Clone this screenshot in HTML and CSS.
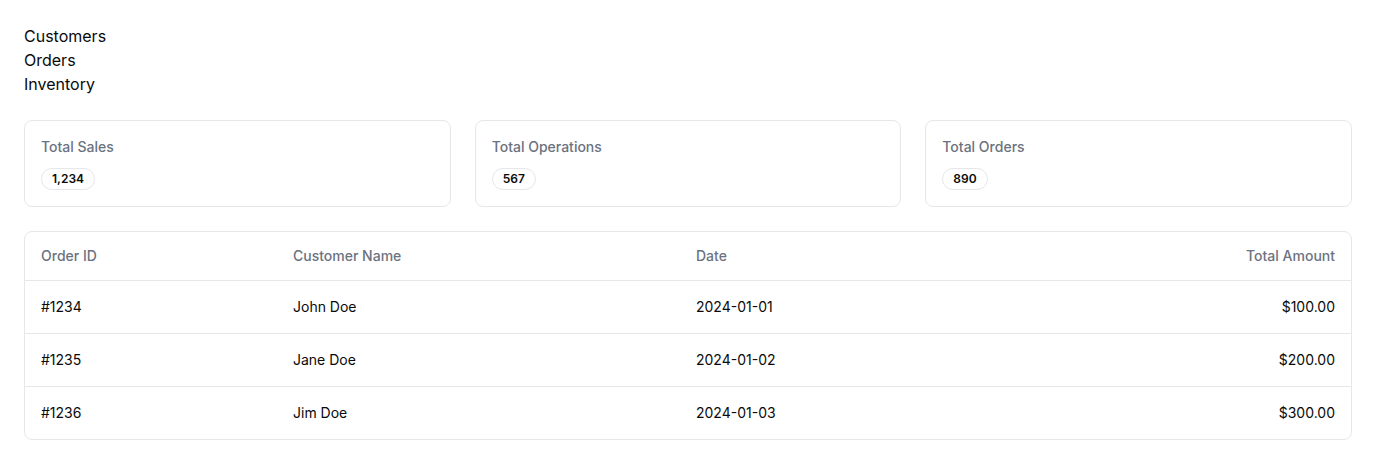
FILE: index.html
```html
<!DOCTYPE html>
<html lang="en">
<head>
<meta charset="utf-8">
<title>Dashboard</title>
<link rel="stylesheet" href="styles.css">
</head>
<body>
<div class="page">
  <nav class="nav">
    <a class="nav-link" href="#">Customers</a>
    <a class="nav-link" href="#">Orders</a>
    <a class="nav-link" href="#">Inventory</a>
  </nav>
  <section class="stats">
    <div class="card">
      <div class="card-title">Total Sales</div>
      <span class="badge">1,234</span>
    </div>
    <div class="card">
      <div class="card-title">Total Operations</div>
      <span class="badge">567</span>
    </div>
    <div class="card">
      <div class="card-title">Total Orders</div>
      <span class="badge">890</span>
    </div>
  </section>
  <div class="table-wrap">
    <table class="orders">
      <colgroup>
        <col class="c1"><col class="c2"><col class="c3"><col class="c4">
      </colgroup>
      <thead>
        <tr><th>Order ID</th><th>Customer Name</th><th>Date</th><th class="right">Total Amount</th></tr>
      </thead>
      <tbody>
        <tr><td>#1234</td><td>John Doe</td><td>2024-01-01</td><td class="right">$100.00</td></tr>
        <tr><td>#1235</td><td>Jane Doe</td><td>2024-01-02</td><td class="right">$200.00</td></tr>
        <tr><td>#1236</td><td>Jim Doe</td><td>2024-01-03</td><td class="right">$300.00</td></tr>
      </tbody>
    </table>
  </div>
</div>
</body>
</html>
```
FILE: styles.css
```css
* { box-sizing: border-box; }
html, body { margin: 0; padding: 0; background: #ffffff; }
body {
  font-family: Inter, "Noto Sans", sans-serif;
  color: #0a0a0a;
}
.page {
  padding: 24px;
  display: flex;
  flex-direction: column;
  gap: 24px;
}
.nav {
  display: flex;
  flex-direction: column;
}
.nav-link {
  font-size: 16px;
  line-height: 24px;
  color: #0a0a0a;
  text-decoration: none;
}
.stats {
  display: grid;
  grid-template-columns: repeat(3, 1fr);
  gap: 24px;
}
.card {
  border: 1px solid #e5e7eb;
  border-radius: 8px;
  padding: 16px;
  display: flex;
  flex-direction: column;
  align-items: flex-start;
}
.card-title {
  font-size: 14px;
  line-height: 20px;
  font-weight: 500;
  color: #6b7280;
  margin-bottom: 11px;
}
.badge {
  display: inline-block;
  border: 1px solid #e5e7eb;
  border-radius: 9999px;
  padding: 2px 10px;
  font-size: 12px;
  line-height: 16px;
  font-weight: 600;
  color: #0a0a0a;
}
.table-wrap {
  border: 1px solid #e5e7eb;
  border-radius: 8px;
  overflow: hidden;
}
.orders {
  width: 100%;
  border-collapse: collapse;
  table-layout: fixed;
  font-size: 14px;
  line-height: 20px;
}
.c1 { width: 252px; }
.c2 { width: 403px; }
.c3 { width: 400px; }
.orders th {
  height: 48px;
  padding: 0 16px;
  text-align: left;
  font-weight: 500;
  color: #6b7280;
  border-bottom: 1px solid #e5e7eb;
  vertical-align: middle;
}
.orders td {
  padding: 16px;
  color: #0a0a0a;
  border-bottom: 1px solid #e5e7eb;
}
.orders tbody tr:last-child td { border-bottom: none; }
.orders .right { text-align: right; }
```
